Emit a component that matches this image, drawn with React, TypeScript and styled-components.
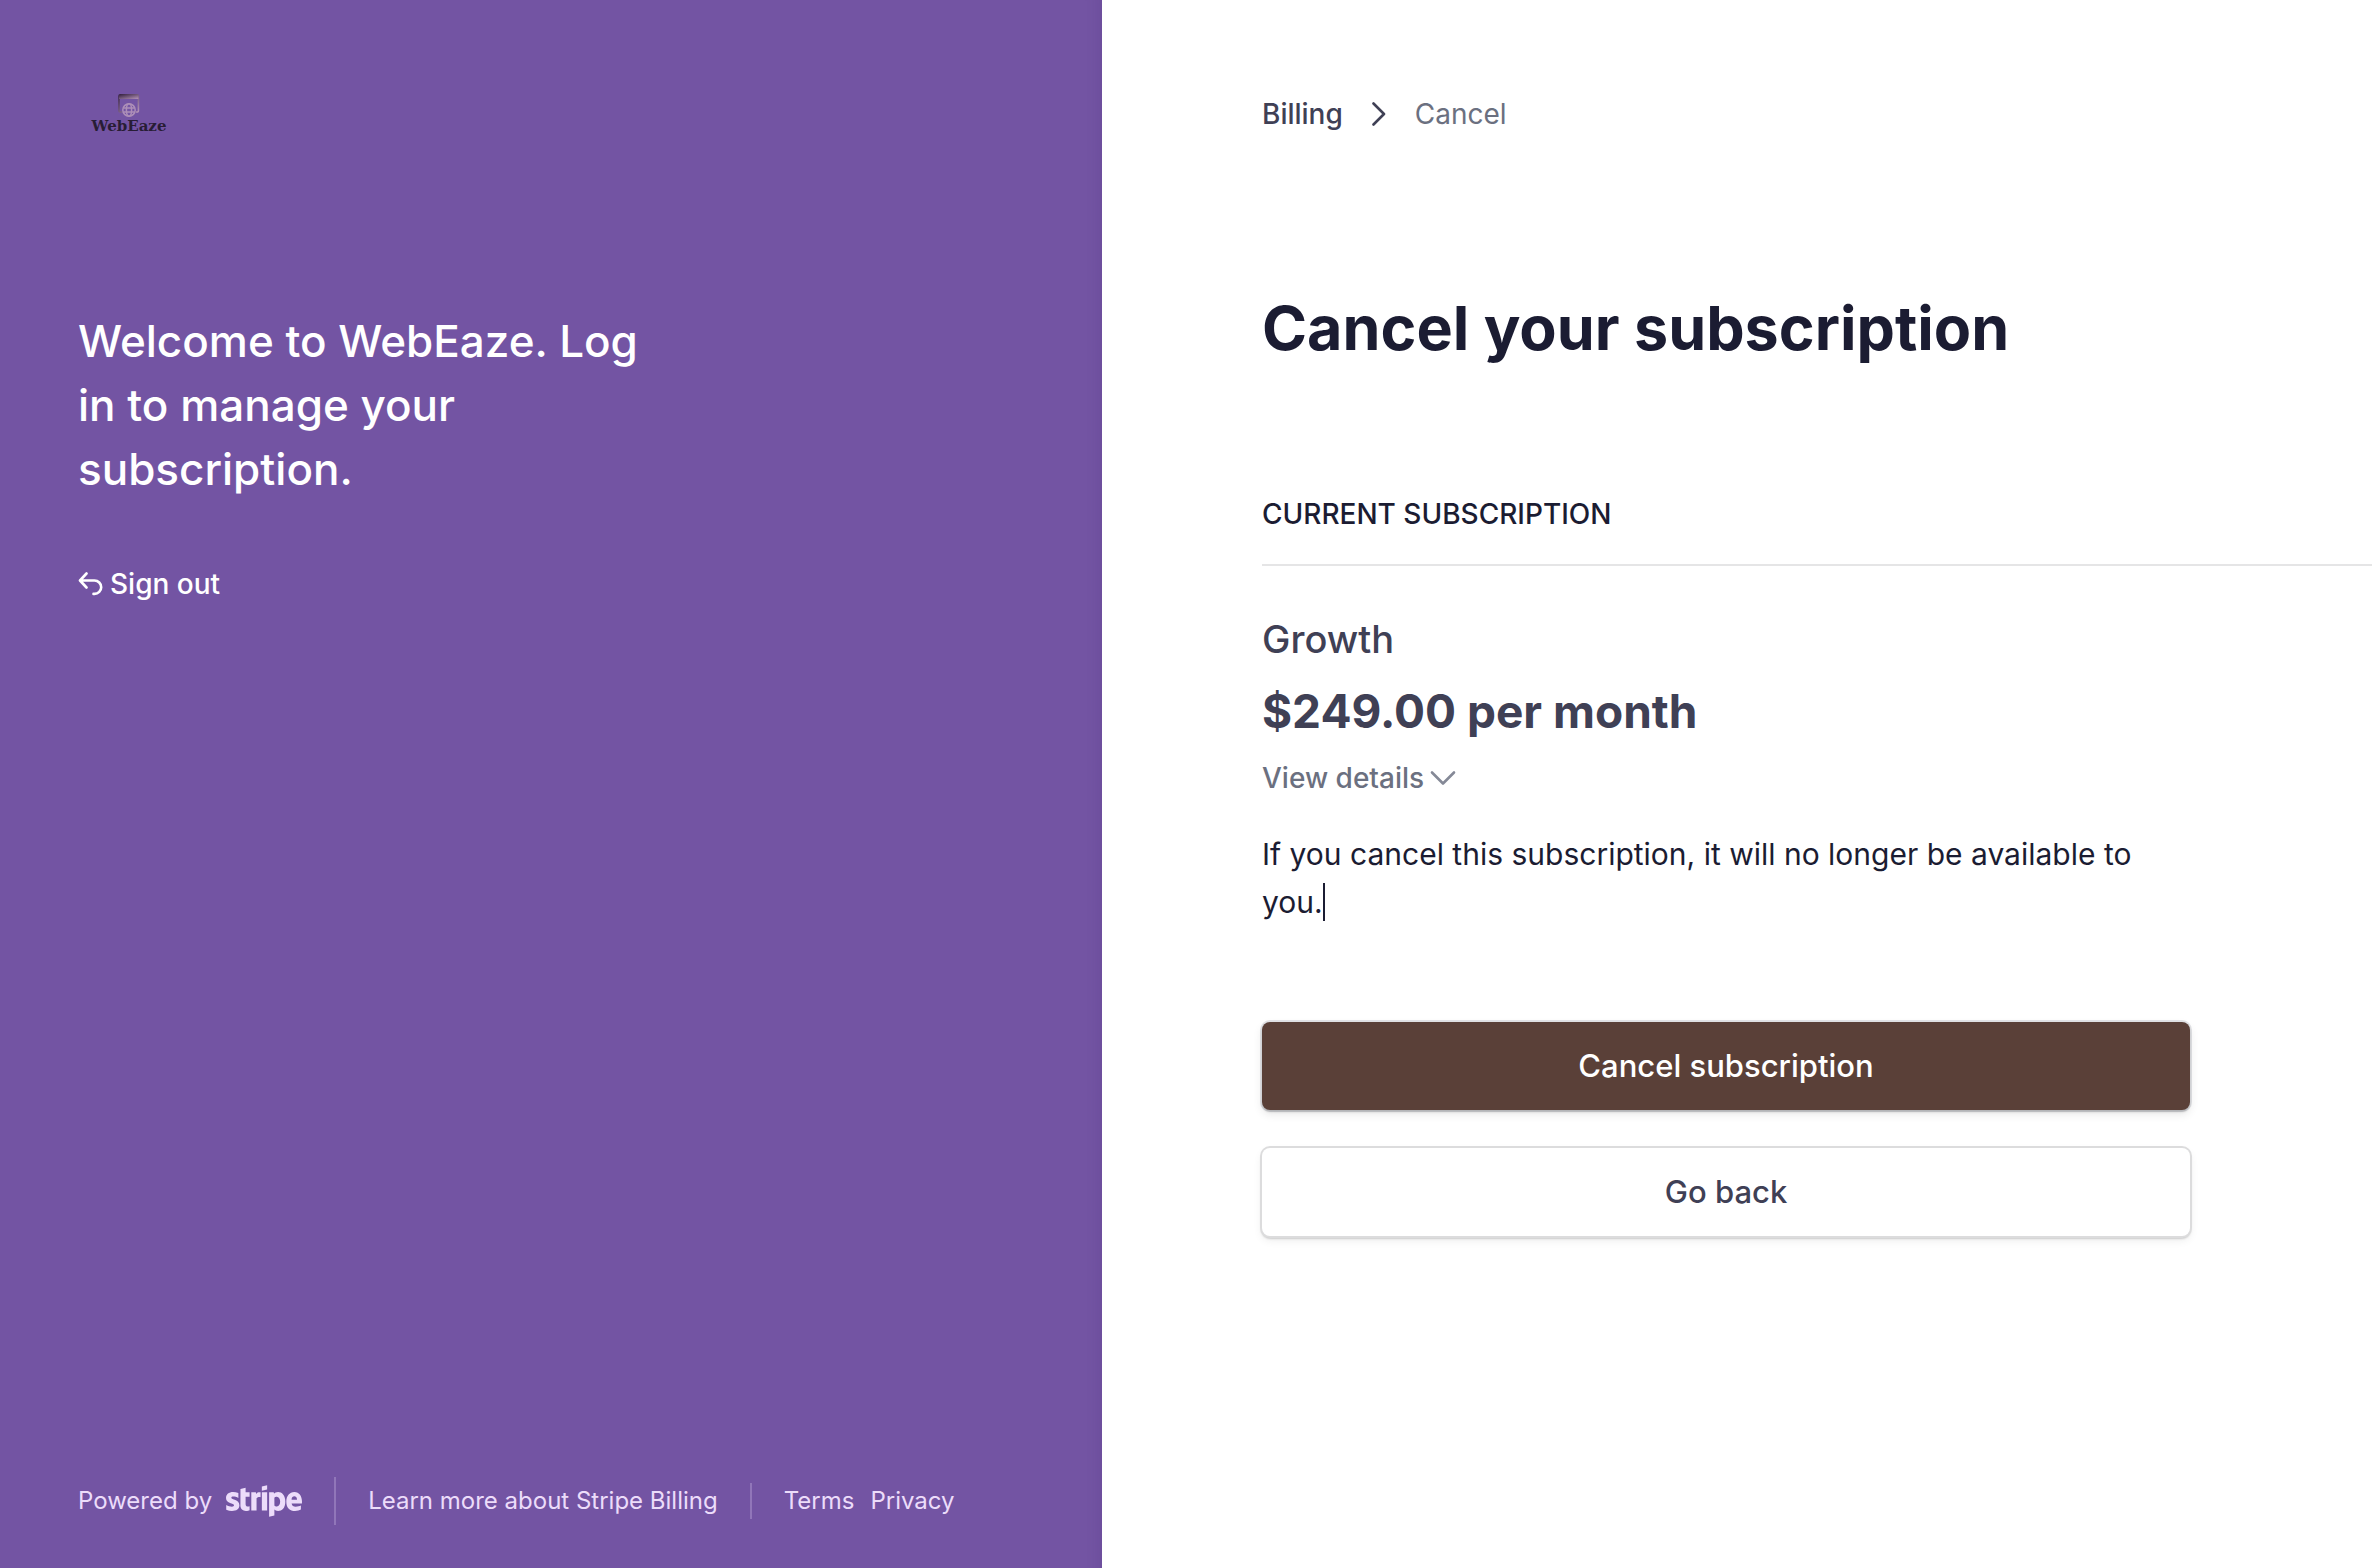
import React from "react";
import styled, { createGlobalStyle, css } from "styled-components";
import { FaStripe } from "react-icons/fa6";

const color = {
  purple: "#7354a3",
  lilac: "#ecdcfa",
  ink: "#1b1c32",
  slate: "#3f4055",
  grey: "#6b7080",
  brown: "#5a4038",
  line: "#e5e5e6",
};

const GlobalStyle = createGlobalStyle`
  *, *::before, *::after { box-sizing: border-box; }
  body {
    margin: 0;
    background: #fff;
    color: ${color.ink};
    font-family: Inter, "Liberation Sans", sans-serif;
  }
  h1, h2, p, ol { margin: 0; padding: 0; }
`;

const Shell = styled.div`
  display: grid;
  grid-template-columns: 551fr 635fr;
  min-height: 100vh;
`;

const Sidebar = styled.aside`
  display: flex;
  flex-direction: column;
  padding: 84px 78px 39px;
  background: ${color.purple};
  box-shadow: inset -16px 0 16px -16px rgba(50, 20, 90, 0.15);
`;

const Brand = styled.a`
  display: flex;
  flex-direction: column;
  align-items: center;
  align-self: flex-start;
  width: 102px;
  padding-top: 10px;
  color: #281d35;
  text-decoration: none;
`;

const BrandName = styled.span`
  font: 700 15px/16px "DejaVu Serif", serif;
`;

const Welcome = styled.p`
  max-width: 600px;
  margin-top: 175px;
  color: #fff;
  font-size: 44px;
  font-weight: 500;
  line-height: 64px;
`;

const SignOut = styled.a`
  display: flex;
  align-items: center;
  align-self: flex-start;
  gap: 6px;
  margin-top: 63px;
  color: #fff;
  font-size: 28px;
  font-weight: 500;
  line-height: 40px;
  text-decoration: none;
`;

const Footer = styled.footer`
  display: flex;
  align-items: center;
  margin-top: auto;
  font-size: 24px;
  line-height: 56px;
`;

const FooterLink = styled.a`
  display: flex;
  align-items: center;
  gap: 14px;
  color: ${color.lilac};
  text-decoration: none;
  white-space: nowrap;

  & + & { margin-left: 16px; }
`;

const StripeLogo = styled(FaStripe)`
  width: 76px;
  height: 36px;
`;

const Divider = styled.span<{ $height: number }>`
  width: 2px;
  height: ${(p) => p.$height}px;
  margin: 0 32px;
  background: rgba(236, 220, 250, 0.25);
`;

const Main = styled.main`
  padding: 94px 0 80px 160px;
`;

const Crumbs = styled.ol`
  display: flex;
  align-items: center;
  list-style: none;
  font-size: 28px;
  line-height: 40px;
`;

const Crumb = styled.li<{ $current?: boolean }>`
  display: flex;
  align-items: center;
  color: ${(p) => (p.$current ? color.grey : color.slate)};
  font-weight: ${(p) => (p.$current ? 400 : 500)};

  a { color: inherit; text-decoration: none; }
  svg { margin: 0 28px; }
`;

const Title = styled.h1`
  margin-top: 154px;
  font-size: 61px;
  font-weight: 700;
  line-height: 80px;
`;

const SectionTitle = styled.h2`
  margin-top: 126px;
  padding-bottom: 30px;
  border-bottom: 2px solid ${color.line};
  font-size: 28px;
  font-weight: 500;
  line-height: 40px;
`;

const Plan = styled.section`
  display: flex;
  flex-direction: column;
  align-items: flex-start;
  padding-top: 47px;
  color: ${color.slate};
`;

const PlanName = styled.p`
  font-size: 38px;
  font-weight: 500;
  line-height: 52px;
`;

const Price = styled.p`
  margin-top: 16px;
  font-size: 46px;
  font-weight: 700;
  line-height: 60px;
`;

const Details = styled.button`
  display: flex;
  align-items: center;
  gap: 6px;
  margin-top: 17px;
  padding: 0;
  border: 0;
  background: none;
  color: ${color.grey};
  font: inherit;
  font-size: 28px;
  font-weight: 500;
  line-height: 40px;
`;

const Notice = styled.p`
  max-width: 928px;
  margin-top: 32px;
  font-size: 30px;
  line-height: 48px;
`;

const Caret = styled.span`
  display: inline-block;
  width: 2px;
  height: 38px;
  background: ${color.ink};
  vertical-align: -8px;
`;

const Actions = styled.div`
  display: flex;
  flex-direction: column;
  gap: 38px;
  max-width: 928px;
  margin-top: 96px;
`;

const Action = styled.button<{ $primary?: boolean }>`
  height: 88px;
  border: 0;
  border-radius: 8px;
  background: #fff;
  color: ${color.slate};
  font: 500 31px/40px Inter, "Liberation Sans", sans-serif;
  box-shadow: 0 0 0 2px #dcdcdd, 0 2px 2px 1px rgba(0, 0, 0, 0.16),
    0 4px 10px rgba(0, 0, 0, 0.08);

  ${(p) =>
    p.$primary &&
    css`
      background: ${color.brown};
      color: #fff;
      box-shadow: 0 0 0 2px rgba(60, 66, 87, 0.14), 0 2px 2px rgba(0, 0, 0, 0.16),
        0 4px 10px rgba(0, 0, 0, 0.1);
    `}
`;

const BrandMark = () => (
  <svg width="22" height="24" viewBox="0 0 22 24" fill="none" aria-hidden="true">
    <defs>
      <linearGradient id="mark" x1="0" y1="0" x2="1" y2="1">
        <stop offset="0" stopColor="#3a2645" />
        <stop offset="1" stopColor="#b493b8" />
      </linearGradient>
    </defs>
    <path
      d="M4 18H2.200A1.200 1.200 0 0 1 1 16.800V2A1.200 1.200 0 0 1 2.200 .8h17A1.200 1.200 0 0 1 20.400 2v14.800a1.200 1.200 0 0 1-1.200 1.200H18"
      stroke="url(#mark)"
      strokeWidth="1.600"
    />
    <path d="M1 .8h19.400v4.200H1z" fill="url(#mark)" />
    <g stroke="#ad8fb8" strokeWidth="1.500">
      <circle cx="11" cy="16" r="6.200" />
      <ellipse cx="11" cy="16" rx="2.600" ry="6.200" />
      <path d="M5.500 14h11M5.500 18h11" />
    </g>
  </svg>
);

const ReturnIcon = () => (
  <svg width="26" height="24" viewBox="0 0 26 24" fill="none" stroke="currentColor" strokeWidth="2.600" strokeLinecap="round" strokeLinejoin="round" aria-hidden="true">
    <path d="M8.500 1.500 2 8.500l6.500 7M2.500 8.500H16.500a6.700 6.700 0 0 1 0 13.400h-1" />
  </svg>
);

const ChevronRight = () => (
  <svg width="16" height="24" viewBox="0 0 16 24" fill="none" stroke={color.slate} strokeWidth="2.600" strokeLinecap="round" strokeLinejoin="round" aria-hidden="true">
    <path d="M2.500 1.500 13 12 2.500 22.500" />
  </svg>
);

const ChevronDown = () => (
  <svg width="26" height="16" viewBox="0 0 26 16" fill="none" stroke="#858997" strokeWidth="2.600" strokeLinecap="round" strokeLinejoin="round" aria-hidden="true">
    <path d="M2 2.500 13 13.500 24 2.500" />
  </svg>
);

export default function App() {
  return (
    <>
      <GlobalStyle />
      <Shell>
        <Sidebar>
          <Brand href="#home">
            <BrandMark />
            <BrandName>WebEaze</BrandName>
          </Brand>
          <Welcome>Welcome to WebEaze. Log in to manage your subscription.</Welcome>
          <SignOut href="#sign-out">
            <ReturnIcon />
            Sign out
          </SignOut>
          <Footer>
            <FooterLink href="#stripe">
              Powered by
              <StripeLogo preserveAspectRatio="xMidYMid slice" aria-label="Stripe" />
            </FooterLink>
            <Divider $height={48} />
            <FooterLink href="#billing">Learn more about Stripe Billing</FooterLink>
            <Divider $height={36} />
            <FooterLink href="#terms">Terms</FooterLink>
            <FooterLink href="#privacy">Privacy</FooterLink>
          </Footer>
        </Sidebar>
        <Main>
          <nav aria-label="Breadcrumb">
            <Crumbs>
              <Crumb>
                <a href="#billing-home">Billing</a>
                <ChevronRight />
              </Crumb>
              <Crumb $current aria-current="page">Cancel</Crumb>
            </Crumbs>
          </nav>
          <Title>Cancel your subscription</Title>
          <SectionTitle>CURRENT SUBSCRIPTION</SectionTitle>
          <Plan>
            <PlanName>Growth</PlanName>
            <Price>$249.00 per month</Price>
            <Details type="button">
              View details
              <ChevronDown />
            </Details>
          </Plan>
          <Notice>
            If you cancel this subscription, it will no longer be available to you.
            <Caret />
          </Notice>
          <Actions>
            <Action type="button" $primary>Cancel subscription</Action>
            <Action type="button">Go back</Action>
          </Actions>
        </Main>
      </Shell>
    </>
  );
}
